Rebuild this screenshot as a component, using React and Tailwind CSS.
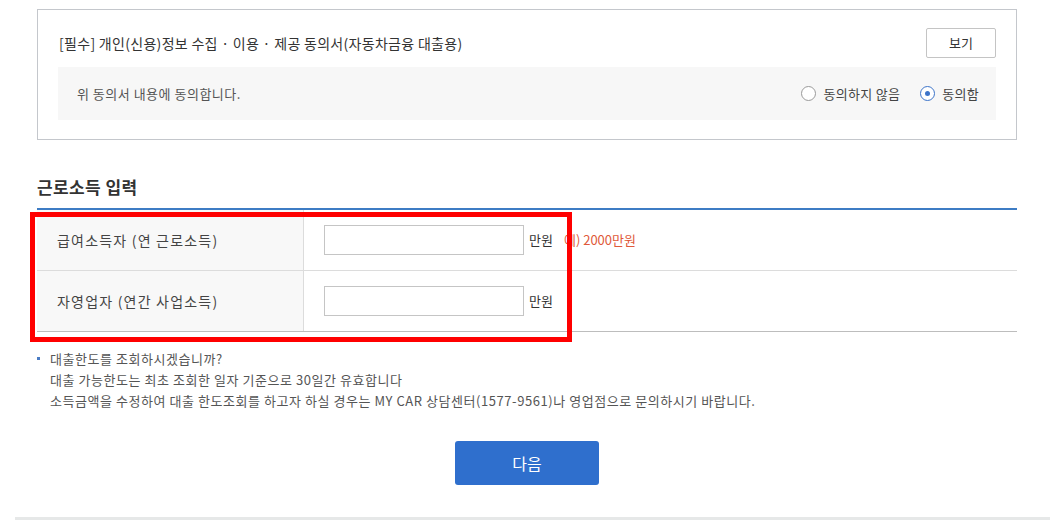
export default function App() {
  const font = { fontFamily: '"Noto Sans CJK KR", "Noto Sans", sans-serif' };
  return (
    <div className="relative w-[1050px] h-[520px] bg-white overflow-hidden text-[#333]" style={font}>
      <div className="w-[980px] ml-[37px]">
        {/* Agreement box */}
        <div className="mt-[9px] h-[131px] border border-[#c4c7cc] pt-[18px] px-[20px]">
          <div className="flex items-center justify-between h-[30px]">
            <span className="ml-[1px] text-[14px] text-[#333] tracking-[0.3px]">[필수] 개인(신용)정보 수집 · 이용 · 제공 동의서(자동차금융 대출용)</span>
            <button className="w-[70px] h-[30px] border border-[#c4c4c4] bg-white text-[13px] text-[#333] rounded-[2px]">보기</button>
          </div>
          <div className="mt-[9px] h-[53px] bg-[#f7f7f7] flex items-center justify-between pl-[19px] pr-[17px]">
            <span className="text-[13px] text-[#555] tracking-[0.5px]">위 동의서 내용에 동의합니다.</span>
            <div className="flex items-center text-[13px] text-[#444]">
              <span className="w-[15px] h-[15px] rounded-full border border-[#9a9a9a] bg-white"></span>
              <span className="ml-[7px] tracking-[0.3px]">동의하지 않음</span>
              <span className="ml-[20px] w-[15px] h-[15px] rounded-full border border-[#3d74c9] bg-white flex items-center justify-center">
                <span className="w-[5px] h-[5px] rounded-full bg-[#3d74c9]"></span>
              </span>
              <span className="ml-[7px] tracking-[0.3px]">동의함</span>
            </div>
          </div>
        </div>

        {/* Heading */}
        <h2 className="mt-[35px] text-[17px] leading-[24px] font-bold text-[#333] tracking-[0.4px]">근로소득 입력</h2>
        <div className="mt-[9px] h-[2px] bg-[#3d7cc4]"></div>

        {/* Table */}
        <div className="border-b border-[#bdbdbd]">
          <div className="flex h-[61px] border-b border-[#dcdcdc]">
            <div className="w-[267px] bg-[#f8f8f8] border-r border-[#dcdcdc] flex items-center pl-[20px] text-[14px] text-[#444] tracking-[1.2px]">급여소득자 (연 근로소득)</div>
            <div className="flex items-center pl-[20px]">
              <input className="w-[200px] h-[30px] border border-[#c5c5c5] outline-none" />
              <span className="ml-[5px] text-[13px] text-[#333]">만원</span>
              <span className="ml-[11px] text-[13px] text-[#e0593a]">예) 2000만원</span>
            </div>
          </div>
          <div className="flex h-[60px]">
            <div className="w-[267px] bg-[#f8f8f8] border-r border-[#dcdcdc] flex items-center pl-[20px] text-[14px] text-[#444] tracking-[1.2px]">자영업자 (연간 사업소득)</div>
            <div className="flex items-center pl-[20px]">
              <input className="w-[200px] h-[30px] border border-[#c5c5c5] outline-none" />
              <span className="ml-[5px] text-[13px] text-[#333]">만원</span>
            </div>
          </div>
        </div>

        {/* Notes */}
        <div className="mt-[16px] flex text-[13px] leading-[21px] text-[#555] tracking-[0.55px]">
          <span className="w-[3px] h-[3px] bg-[#4a7cc4] mt-[9px] mr-[10px] shrink-0"></span>
          <div>
            <p>대출한도를 조회하시겠습니까?</p>
            <p>대출 가능한도는 최초 조회한 일자 기준으로 30일간 유효합니다</p>
            <p>소득금액을 수정하여 대출 한도조회를 하고자 하실 경우는 MY CAR 상담센터(1577-9561)나 영업점으로 문의하시기 바랍니다.</p>
          </div>
        </div>

        {/* Button */}
        <div className="mt-[30px] flex justify-center">
          <button className="w-[144px] h-[44px] bg-[#2f6fcd] rounded-[3px] text-white text-[16px]">다음</button>
        </div>
      </div>

      <div className="absolute left-[15px] right-0 top-[517px] h-[3px] bg-[#e6e8e8]"></div>

      {/* Red annotation overlay */}
      <div className="absolute left-[30px] top-[212px] w-[542px] h-[130px] border-[5px] border-[#ff0000] pointer-events-none"></div>
    </div>
  );
}
